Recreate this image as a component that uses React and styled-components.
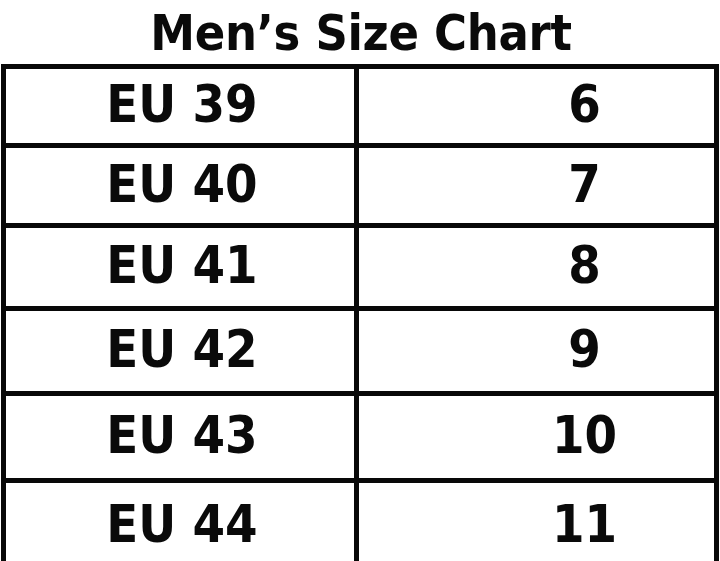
import React from 'react';
import styled, { createGlobalStyle } from 'styled-components';

const GlobalStyle = createGlobalStyle`
  html, body {
    margin: 0;
    padding: 0;
    background: #ffffff;
  }
`;

const rows = [
  { eu: 'EU 39', uk: '6', h: 79 },
  { eu: 'EU 40', uk: '7', h: 80 },
  { eu: 'EU 41', uk: '8', h: 83 },
  { eu: 'EU 42', uk: '9', h: 85 },
  { eu: 'EU 43', uk: '10', h: 87 },
  { eu: 'EU 44', uk: '11', h: 90 },
];

export default function App() {
  return (
    <>
      <GlobalStyle />
      <Page>
        <Title>Men’s Size Chart</Title>
        <Chart>
          {rows.map((r) => (
            <Row key={r.eu} $h={r.h}>
              <EuCell>{r.eu}</EuCell>
              <UkCell>{r.uk}</UkCell>
            </Row>
          ))}
        </Chart>
      </Page>
    </>
  );
}

const Page = styled.div`
  width: 720px;
  height: 561px;
  overflow: hidden;
  background: #ffffff;
  display: flex;
  flex-direction: column;
`;

const Title = styled.h1`
  margin: 0;
  height: 64px;
  flex: 0 0 64px;
  display: flex;
  align-items: center;
  justify-content: center;
  padding: 2px 0 0 2px;
  box-sizing: border-box;
  font-family: "DejaVu Sans Condensed", "DejaVu Sans", sans-serif;
  font-weight: 700;
  font-size: 50px;
  letter-spacing: -0.3px;
  line-height: 1;
  color: #0a0a0a;
`;

const Chart = styled.div`
  display: flex;
  flex-direction: column;
  margin: 0 1px 0 1px;
  border-left: 5px solid #080808;
  border-right: 5px solid #080808;
`;

const Row = styled.div`
  display: grid;
  grid-template-columns: 353px 1fr;
  height: ${p => p.$h}px;
  flex: 0 0 ${p => p.$h}px;
  border-top: 5px solid #080808;
  box-sizing: border-box;
`;

const Cell = styled.div`
  display: flex;
  align-items: center;
  justify-content: center;
  padding-bottom: 4px;
  font-family: "DejaVu Sans Condensed", "DejaVu Sans", sans-serif;
  font-weight: 700;
  font-size: 52px;
  color: #0a0a0a;
`;

const EuCell = styled(Cell)`
  border-right: 5px solid #080808;
  padding-left: 4px;
`;

const UkCell = styled(Cell)`
  padding-left: 96px;
`;
